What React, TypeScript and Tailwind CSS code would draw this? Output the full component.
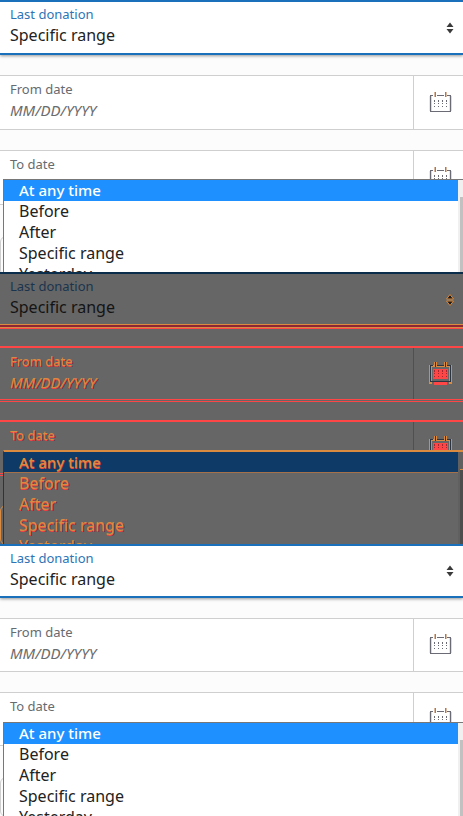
import { useId } from "react";
import clsx from "clsx";

type Mode = "before" | "diff" | "after";

const options = ["At any time", "Before", "After", "Specific range", "Yesterday"];

const diffText = "text-[#db8b3f] [text-shadow:0_1px_0_#f04444,1px_1px_0_#2b3440]";

function CalendarIcon({ mode }: { mode: Mode }) {
  const diff = mode === "diff";
  const line = diff ? "#2b3440" : "#6b6b76";
  return (
    <svg width="24" height="24" viewBox="0 0 24 24" shapeRendering="crispEdges" aria-hidden="true">
      {diff ? (
        <>
          <path d="M0 4h3v19H0zM20 4h3v19h-3zM3 4h17v2H3z" fill="#db8b3f" />
          <path d="M4 8h15v10H4zM5 20h13v4H5z" fill="#ff4646" />
          <path d="M5 1h3v5H5zM15 1h3v5h-3z" fill="#db8b3f" />
        </>
      ) : (
        <>
          <path d="M0 5h1v15H0zM20 5h1v15h-1z" fill="#ffe3bd" />
          <path d="M2 5h1v15H2zM22 5h1v15h-1z" fill="#bde3ff" />
        </>
      )}
      <path d="M1 4h3v1H1zM8 4h7v1H8zM18 4h4v1h-4zM1 5h1v15H1zM21 5h1v15h-1zM1 20h21v1H1z" fill={line} />
      <path d="M6 1h1v5H6zM16 1h1v5h-1z" fill={diff ? "#2b3440" : "#6b83c4"} />
      {!diff && <path d="M5 1h1v5H5zM17 1h1v5h-1z" fill="#d9b9a0" />}
      {[9, 12, 15].map((y) =>
        [5, 9, 13, 17].map((x) => (
          <rect
            key={`${x}-${y}`}
            x={x}
            y={y}
            width="1"
            height={y === 9 ? 2 : 1}
            fill={diff ? "#a3262e" : line}
          />
        )),
      )}
    </svg>
  );
}

function SortArrows({ mode }: { mode: Mode }) {
  return (
    <svg
      className="pointer-events-none"
      width="8"
      height="12"
      viewBox="0 0 8 12"
      aria-hidden="true"
      stroke={mode === "diff" ? "#db8b3f" : "none"}
      fill={mode === "diff" ? "#1c1a18" : "#3a3a3a"}
    >
      <path d="M4 0.5 7.5 5h-7zM4 11.5 7.5 7h-7z" />
    </svg>
  );
}

function DateField({ label, mode }: { label: string; mode: Mode }) {
  const id = useId();
  const diff = mode === "diff";
  return (
    <div
      className={clsx(
        "flex",
        mode === "before" && "h-[55px]",
        mode === "diff" && "h-14",
        mode === "after" && "h-[54px]",
        diff
          ? "border-t-2 border-b-[3px] border-[#ff4646] bg-[#666666] [border-bottom-style:double]"
          : "border-y border-[#cfcfcf] bg-white",
      )}
    >
      <div className="flex min-w-0 grow flex-col px-[10px] pt-[3px]">
        <label htmlFor={id} className={clsx("text-[13px] leading-5", diff ? diffText : "text-[#666b70]")}>
          {label}
        </label>
        <input
          id={id}
          type="text"
          placeholder="MM/DD/YYYY"
          className={clsx(
            "h-[22px] w-full bg-transparent text-[15px] leading-[22px] italic outline-none",
            diff
              ? "placeholder:text-[#db8b3f] placeholder:[text-shadow:0_1px_0_#f04444,1px_1px_0_#2b3440]"
              : "placeholder:text-[#6b6b6b]",
          )}
        />
      </div>
      <button
        type="button"
        aria-label={`Choose ${label.toLowerCase()}`}
        className={clsx(
          "flex w-[50px] shrink-0 items-start justify-center border-l pl-[5px]",
          diff ? "border-[#505050]" : "border-[#cfcfcf]",
          mode === "before" && "pt-[15px]",
          mode === "diff" && "pt-[13px]",
          mode === "after" && "pt-[14px]",
        )}
      >
        <CalendarIcon mode={mode} />
      </button>
    </div>
  );
}

function OptionList({ mode }: { mode: Mode }) {
  const diff = mode === "diff";
  return (
    <div
      className={clsx(
        "absolute right-0 left-[3px] flex h-[110px] border-l",
        mode === "before" ? "top-[179px]" : "top-[178px]",
        diff
          ? "border-t-2 border-t-[#db8b3f] border-l-[#333333] bg-[#666666]"
          : "border-t border-[#777777] bg-white",
      )}
    >
      <ul role="listbox" aria-label="Last donation" className="grow text-base leading-[21px]">
        {options.map((option, i) => (
          <li
            key={option}
            role="option"
            aria-selected={i === 0}
            className={clsx(
              "h-[21px] pl-[15px]",
              i === 0 && "text-[15px] font-medium",
              i === 0 && (diff ? "border-b border-[#a5714a] bg-[#0d3a66]" : "bg-[#1e90ff] text-white"),
              i > 0 && !diff && "text-[#222222]",
              diff && diffText,
            )}
          >
            {option}
          </li>
        ))}
      </ul>
      <div className={clsx("w-[5px] pt-[17px] pl-[2px]", diff ? "bg-[#606060]" : "bg-[#f0f0f0]")}>
        <div className={clsx("h-full", diff ? "border-t border-[#db8b3f] bg-[#4d4d4d]" : "bg-[#c1c1c1]")} />
      </div>
    </div>
  );
}

function Panel({ mode }: { mode: Mode }) {
  const id = useId();
  const diff = mode === "diff";
  return (
    <section className={clsx("relative h-[272px] overflow-hidden", diff ? "bg-[#656565]" : "bg-[#fcfcfc]")}>
      <div
        className={clsx(
          "relative flex items-center border-y-2 pr-[9px] pl-[10px]",
          mode === "after" ? "h-[54px]" : "h-[55px]",
          diff
            ? "border-t-[#0b2d4c] border-b-[#8d2735] bg-[#666666] shadow-[inset_0_-1px_0_#db8b3f,0_1px_0_#db8b3f,0_2px_0_#ff4646]"
            : "border-[#1a70bb] bg-white shadow-[0_1px_3px_rgba(0,0,0,0.4)]",
        )}
      >
        <div className="flex h-full min-w-0 grow flex-col pt-[2px]">
          <label htmlFor={id} className={clsx("text-[13px] leading-5", diff ? "text-[#1b344d]" : "text-[#2e74b5]")}>
            Last donation
          </label>
          <select
            id={id}
            defaultValue="Specific range"
            className={clsx(
              "h-[22px] w-full appearance-none bg-transparent text-base leading-[22px] outline-none",
              diff ? "text-[#141414]" : "text-[#222222]",
            )}
          >
            {options.map((option) => (
              <option key={option}>{option}</option>
            ))}
          </select>
        </div>
        <SortArrows mode={mode} />
      </div>
      <div className={clsx("flex flex-col", diff ? "gap-[18px] pt-[19px]" : "gap-5 pt-5")}>
        <DateField label="From date" mode={mode} />
        <DateField label="To date" mode={mode} />
        <button
          type="button"
          aria-label="Apply"
          className={clsx(
            "mt-[11px] h-10 w-full rounded-md border",
            diff ? "border-[#db8b3f]" : "border-[#cfcfcf]",
          )}
        />
      </div>
      <OptionList mode={mode} />
    </section>
  );
}

export default function App() {
  return (
    <main className="w-full font-['Noto_Sans',sans-serif]">
      <Panel mode="before" />
      <Panel mode="diff" />
      <Panel mode="after" />
    </main>
  );
}
